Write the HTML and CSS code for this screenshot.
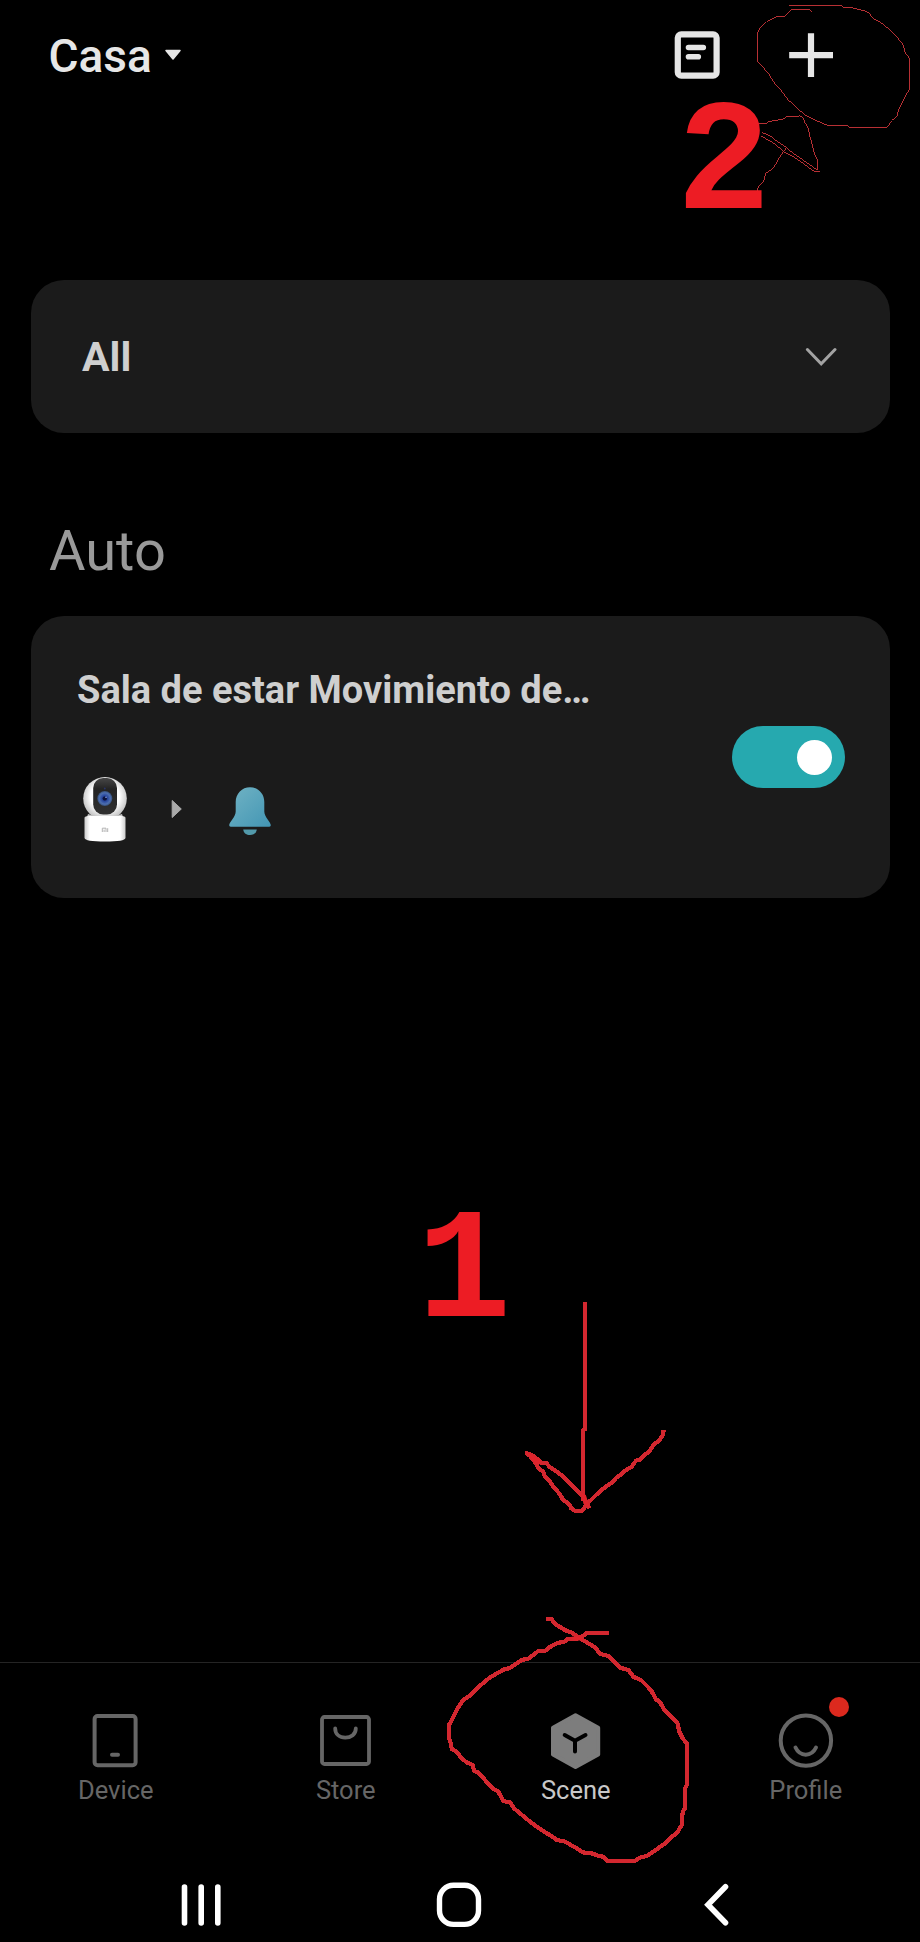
FILE: index.html
```html
<!DOCTYPE html>
<html lang="es">
<head>
<meta charset="utf-8">
<title>Casa</title>
<link rel="stylesheet" href="styles.css">
</head>
<body>
<div class="screen">
  <header class="topbar">
    <div class="home">
      <span class="home-name">Casa</span>
      <svg class="home-caret" width="18" height="12" viewBox="0 0 18 12"><path d="M2 1.5H16L9 10Z" fill="#e6e6e6" stroke="#e6e6e6" stroke-width="1.5" stroke-linejoin="round"/></svg>
    </div>
    <div class="actions">
      <svg width="48" height="50" viewBox="0 0 48 50" fill="none" stroke="#e6e6e6" stroke-linecap="round"><rect x="4.8" y="4.3" width="38.8" height="41.4" rx="3.5" stroke-width="6.2"/><path d="M15.5 17.5H30.3M15.5 26.8H25.3" stroke-width="5.6"/></svg>
      <svg width="48" height="50" viewBox="0 0 48 50" fill="none" stroke="#e6e6e6" stroke-width="6.2"><path d="M2.2 25.2H46M24 3.2V47"/></svg>
    </div>
  </header>

  <main class="content">
    <section class="card filter">
      <span class="filter-label">All</span>
      <svg width="32" height="20" viewBox="0 0 32 20" fill="none" stroke="#a3a3a3" stroke-width="3" stroke-linecap="round"><path d="M2.4 2.5L16.2 16.8L30 2.5"/></svg>
    </section>

    <h2 class="section-title">Auto</h2>

    <section class="card rule">
      <div class="rule-info">
        <div class="rule-title">Sala de estar Movimiento de…</div>
        <div class="rule-flow">
          <svg class="camera" width="46" height="68" viewBox="0 0 46 68">
            <defs>
              <radialGradient id="shell" cx=".5" cy=".45" r=".55"><stop offset=".6" stop-color="#fff"/><stop offset="1" stop-color="#bdbdbd"/></radialGradient>
              <linearGradient id="face" x1="0" y1="0" x2="0" y2="1"><stop offset="0" stop-color="#474747"/><stop offset=".3" stop-color="#242424"/><stop offset="1" stop-color="#303030"/></linearGradient>
              <linearGradient id="base" x1="0" x2="1"><stop offset="0" stop-color="#ccc"/><stop offset=".13" stop-color="#fff"/><stop offset=".87" stop-color="#fff"/><stop offset="1" stop-color="#ccc"/></linearGradient>
              <radialGradient id="lens"><stop offset="0" stop-color="#0c1645"/><stop offset=".4" stop-color="#2a49a0"/><stop offset=".75" stop-color="#4d6fae"/><stop offset="1" stop-color="#354e78"/></radialGradient>
            </defs>
            <ellipse cx="23" cy="22.5" rx="21.8" ry="21.5" fill="url(#shell)"/>
            <rect x="11.2" y="2" width="23.8" height="36.5" rx="10" fill="url(#face)"/>
            <circle cx="22.8" cy="22.5" r="7.5" fill="url(#lens)"/>
            <circle cx="22.8" cy="22.5" r="2.1" fill="#0b123b"/>
            <circle cx="24" cy="21.3" r=".8" fill="#8da8ed"/>
            <circle cx="22.8" cy="12.5" r=".9" fill="#29356c"/>
            <path d="M6 38Q23 45 40 38L41 41H5Z" fill="#c8c8c8"/>
            <path d="M2.5 41.5Q3 40 6 40H40Q43 40 43.5 41.5V62Q43 65.5 23 65.5T2.5 62Z" fill="url(#base)"/>
            <path d="M20.3 56V52.2H24V56M22.1 53.6V56M25.7 52.2V56" fill="none" stroke="#b3b3b3" stroke-width="1"/>
          </svg>
          <svg class="flow-arrow" width="12" height="20" viewBox="0 0 12 20"><path d="M1.2 1.5L10.3 10L1.2 18.5Z" fill="#aaa" stroke="#aaa" stroke-linejoin="round"/></svg>
          <svg class="bell" width="44" height="50" viewBox="0 0 44 50">
            <defs><linearGradient id="bellfill" x1="0" y1="0" x2="1" y2="1"><stop offset="0" stop-color="#71b3c4"/><stop offset="1" stop-color="#4396b4"/></linearGradient></defs>
            <path d="M7.7 16C7.7 7.5 14 1.2 22 1.2S36.3 7.5 36.3 16V25.5C36.3 31 42.8 36 42.8 39.3Q42.8 40.7 41.3 40.7H2.7Q1.2 40.7 1.2 39.3C1.2 36 7.7 31 7.7 25.5Z" fill="url(#bellfill)"/>
            <path d="M15.2 43.5H28.8C28.3 47.3 25.5 49 22 49S15.7 47.3 15.2 43.5Z" fill="#5299aa"/>
          </svg>
        </div>
      </div>
      <div class="toggle"><div class="knob"></div></div>
    </section>
  </main>

  <nav class="tabs">
    <div class="tab">
      <svg width="60" height="60" viewBox="0 0 60 60" fill="none" stroke="#666" stroke-width="4"><rect x="9.6" y="6" width="41" height="49.3" rx="3"/><path d="M27 44.8H33" stroke-linecap="round"/></svg>
      <span>Device</span>
    </div>
    <div class="tab">
      <svg width="60" height="60" viewBox="0 0 60 60" fill="none" stroke="#666" stroke-width="3.8"><rect x="7" y="7" width="47" height="47" rx="2.5"/><path d="M20.2 18.5C20.2 24.2 24.5 27.6 30.3 27.6S40.8 24.2 40.8 18.5" stroke-linecap="round"/></svg>
      <span>Store</span>
    </div>
    <div class="tab active">
      <svg width="60" height="60" viewBox="0 0 60 60"><path d="M30.5 5.3L53.2 17.7V44.5L30.5 57L8 44.5V17.7Z" fill="#7d7d7d" stroke="#7d7d7d" stroke-width="4" stroke-linejoin="round"/><path d="M19.7 25L30 30.8L40.5 25M30 30.8V41.5" fill="none" stroke="#000" stroke-width="4" stroke-linecap="round"/></svg>
      <span>Scene</span>
    </div>
    <div class="tab">
      <svg width="60" height="60" viewBox="0 0 60 60" fill="none" stroke="#666" stroke-width="4"><circle cx="30.9" cy="30.6" r="25.2"/><path d="M20.5 37.5C25 47 36.5 47 41 37.5" stroke-linecap="round"/></svg>
      <span>Profile</span>
      <i class="badge"></i>
    </div>
  </nav>

  <footer class="sysbar">
    <svg width="40" height="46" viewBox="0 0 40 46" stroke="#fff" stroke-width="5.6" stroke-linecap="round"><path d="M3.5 5V41M20.2 5V41M36.8 5V41"/></svg>
    <svg class="sys-home" width="48" height="46" viewBox="0 0 48 46"><rect x="4.5" y="3.2" width="39" height="39.2" rx="14" fill="none" stroke="#fff" stroke-width="5.4"/></svg>
    <svg class="sys-back" width="28" height="46" viewBox="0 0 28 46"><path d="M23.5 4.8L6 22.8L23.5 40.8" fill="none" stroke="#fff" stroke-width="5.6" stroke-linecap="round"/></svg>
  </footer>

  <svg class="marks" width="920" height="1942" viewBox="0 0 920 1942">
    <g class="thin" transform="translate(660 0) scale(.33333)">
      <path d="M388 16H545L548 22L580 24L612 32L628 40L640 56L660 66L690 90L714 115L730 135L734 155L748 175V268L738 285L728 305L715 330L712 348L695 362L682 382H568L565 377L502 376L470 362L435 345L412 325L385 300L362 270L340 245L325 220L300 192L292 184V100L300 85L320 65L350 50L375 48L396 28H448L455 35"/>
      <path d="M297 370H320L325 365L370 357L378 351H412L418 346L430 355L436 370L445 385L450 410L458 440L463 460L472 480L473 510M480 514H462L432 492L400 470L372 456L345 432L303 408M305 397L330 407L345 420L372 437L400 460L432 482L472 510M378 445L360 470L340 505L318 520L310 545L292 565V577"/>
    </g>
    <g class="thick" transform="translate(400 1180) scale(.33333)">
      <path d="M555 366V748L549 752V962"/>
      <path d="M791 750L789 765L775 785L763 791L748 814L735 824L722 838L708 842L695 860L678 870L662 885L650 892L635 908L615 922L602 932L585 948L572 961L562 970L552 985L545 994H527L513 985L510 975L488 958L480 943L460 920L448 903L435 890L430 876L415 864L408 850L390 828L380 819L400 828L416 840L424 850H440L448 860L470 875L493 892L505 907L525 925L545 945L560 970L568 985"/>
      <path class="fill" d="M382 819L420 840L418 852L406 850ZM545 940L556 945L568 982L552 972Z"/>
    </g>
    <g class="thick" transform="translate(420 1600) scale(.33333)">
      <path d="M378 57H395L405 72L440 93L455 98L480 115L510 133L528 144L540 162L565 168L580 182L600 203L625 210L640 230L665 242L685 262L695 274L708 298L720 306L730 325L743 340L755 352L772 368L778 395L788 415L800 430V555L795 565V625L788 635L785 675L770 700L755 710L735 730L705 752L680 768L660 773L645 782H562L550 770L535 768L520 761L488 757L470 745L435 725L410 720L395 708L375 697L350 680L330 665L300 640L282 625L270 607L250 603L235 575L220 566L195 540L175 518L162 512L158 495L140 487L125 475L112 457L95 447L93 430L87 415V375L98 355L110 330L130 300L150 287L180 257L210 232L235 218L250 209L270 204L305 180L325 176L355 153H375L385 144L410 130L435 124L443 117L480 115L500 99H566"/>
      <path class="fill" d="M455 112L482 107L486 119L470 121Z"/>
    </g>
    <text class="step" x="676.5" y="208">2</text>
    <text class="step" x="417" y="1316">1</text>
  </svg>
</div>
</body>
</html>
```
FILE: styles.css
```css
* { box-sizing: border-box; }

body {
  margin: 0;
  background: #000;
  font-family: Roboto, "Liberation Sans", sans-serif;
}

svg { display: block; flex: none; }

.screen {
  position: relative;
  display: flex;
  flex-direction: column;
  width: 920px;
  height: 1942px;
  overflow: hidden;
  background: #000;
}

.topbar {
  display: flex;
  align-items: center;
  justify-content: space-between;
  height: 110px;
  padding: 0 85px 0 48.5px;
}

.home { display: flex; align-items: center; gap: 12px; }
.home-name { font-size: 46px; font-weight: 500; line-height: 54px; color: #e6e6e6; padding-top: 1px; }
.actions { display: flex; gap: 66px; }

.content { flex: 1; padding: 169.5px 30px 0 31px; }

.card { display: flex; align-items: center; justify-content: space-between; background: #1b1b1b; border-radius: 33px; }

.filter { height: 153px; padding: 1px 53px 0 51px; }
.filter-label { font-size: 41px; font-weight: 700; line-height: 48px; color: #cfcfcf; }

.section-title {
  margin: 85px 0 32px 18px;
  font-size: 56px;
  font-weight: 400;
  line-height: 66px;
  color: #999;
}

.rule { align-items: flex-start; height: 282px; padding: 52px 46px 0 46px; }
.rule-title { font-size: 38px; font-weight: 700; line-height: 44px; color: #cfcfcf; white-space: nowrap; }
.rule-flow { display: flex; align-items: center; height: 68px; margin: 64px 0 0 5px; }
.flow-arrow { margin: -2px 0 0 42.5px; }
.bell { margin: 2px 0 0 45.5px; }

.toggle { display: flex; align-items: center; justify-content: flex-end; width: 113px; height: 62px; margin: 58.5px -.5px 0 0; padding-right: 13px; border-radius: 31px; background: #26a9af; }
.knob { width: 35px; height: 35px; border-radius: 50%; background: #fff; }

.tabs { display: flex; height: 207px; border-top: 1px solid #242424; }
.tab { position: relative; display: flex; flex: 1; flex-direction: column; align-items: center; padding-top: 47px; font-size: 25.5px; line-height: 30px; color: #666; }
.tab span { margin: 4.5px 0 0 1.5px; }
.tab.active { color: #c8c8c8; }
.badge { position: absolute; top: 34px; left: 139px; width: 20px; height: 20px; border-radius: 50%; background: #dc291e; }

.sysbar { display: flex; height: 73px; padding: 13px 0 0 181px; }
.sys-home { margin-left: 214px; }
.sys-back { margin-left: 219px; }

.marks { position: absolute; top: 0; left: 0; }
.thin path { fill: none; stroke: #b83034; stroke-width: 3; shape-rendering: crispEdges; }
.thick path { fill: none; stroke: #d3272f; stroke-width: 12.5; stroke-linejoin: round; shape-rendering: crispEdges; }
.thick .fill { fill: #e0232b; stroke: #e0232b; stroke-width: 3; }
.step { font-family: "Liberation Mono", "Courier New", monospace; font-size: 157px; font-weight: 700; fill: #ed1c24; }
```
